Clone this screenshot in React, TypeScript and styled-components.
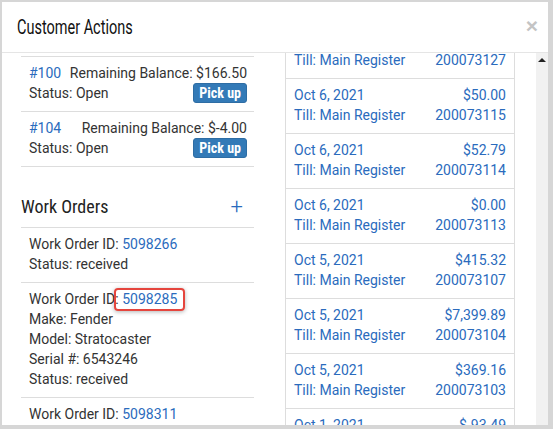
import React, { useLayoutEffect, useRef } from "react";
import styled, { createGlobalStyle } from "styled-components";

const GlobalStyle = createGlobalStyle`
  html, body { margin: 0; padding: 0; background: #d6d6d6; }
  body { font-family: Roboto, "Liberation Sans", sans-serif; color: #333; }
  * { box-sizing: border-box; }
`;

const NARROW = `"Liberation Sans Narrow", "Arial Narrow", "Roboto Condensed", "DejaVu Sans Condensed", sans-serif`;
const BLUE = "#2a6bbd";
const LINE = "#dddddd";

const Frame = styled.div`
  width: 553px;
  height: 429px;
  padding: 2px 5px 4px 2px;
  background: #d6d6d6;
`;

const Modal = styled.div`
  height: 100%;
  background: #fff;
  display: flex;
  flex-direction: column;
`;

const Header = styled.div`
  flex-shrink: 0;
  height: 51px;
  border-bottom: 1px solid #e5e5e5;
  display: flex;
  align-items: center;
  justify-content: space-between;
  padding: 0 10px 0 15px;
`;

const Title = styled.h4`
  margin: 0;
  font-family: Roboto, "Liberation Sans", sans-serif;
  font-weight: 400;
  font-size: 21px;
  line-height: 24px;
  color: #111;
  transform: scaleX(0.69);
  transform-origin: left center;
  white-space: nowrap;
`;

const Close = styled.button`
  border: 0;
  background: none;
  padding: 0 0 4px;
  font-family: "Liberation Sans", Arial, sans-serif;
  font-size: 21px;
  font-weight: 700;
  line-height: 1;
  color: #c4c4c4;
  cursor: pointer;
`;

const Body = styled.div`
  flex: 1;
  min-height: 0;
  display: flex;
`;

const Scroller = styled.div`
  flex: 1;
  position: relative;
  overflow: hidden;
`;

const Columns = styled.div`
  display: grid;
  grid-template-columns: 233px 230px;
  column-gap: 31px;
  align-items: start;
  padding: 15px 21px 0 19px;
`;

const Track = styled.div`
  width: 12px;
  flex-shrink: 0;
  background: #f1f1f1;
  display: flex;
  justify-content: center;
  padding-top: 5px;
`;

const ArrowUp = styled.div`
  width: 0;
  height: 0;
  border-left: 4px solid transparent;
  border-right: 4px solid transparent;
  border-bottom: 4px solid #222;
`;

const Column = styled.div`
  display: flex;
  flex-direction: column;
`;

const SectionHead = styled.div<{ $top: number }>`
  display: flex;
  align-items: center;
  justify-content: space-between;
  height: 22px;
  margin: ${(p) => p.$top}px 0 9px;
  padding-right: 11px;
`;

const HeadText = styled.h4`
  margin: 0;
  font-family: ${NARROW};
  font-weight: 400;
  font-size: 18px;
  line-height: 22px;
  color: #222;
`;

const Plus = styled.span`
  color: ${BLUE};
  font-size: 22px;
  font-weight: 300;
  line-height: 22px;
`;

const List = styled.div`
  border-top: 1px solid ${LINE};
`;

const Item = styled.div`
  padding: 6px 7px 8px 8px;
  border-bottom: 1px solid ${LINE};
  font-size: 14px;
  line-height: 20px;
`;

const Row = styled.div`
  display: flex;
  align-items: center;
  justify-content: space-between;
  height: 20px;
  white-space: nowrap;
`;

const Link = styled.a`
  color: ${BLUE};
  text-decoration: none;
`;

const Highlight = styled.span`
  position: relative;
  display: inline-block;
  &::after {
    content: "";
    position: absolute;
    top: -1px;
    bottom: -2px;
    left: -8px;
    right: -8px;
    border: 2px solid #e5453d;
    border-radius: 4px;
    box-shadow: 0 1px 4px rgba(0, 0, 0, 0.3);
    pointer-events: none;
  }
`;

const PickUp = styled.button`
  height: 20px;
  padding: 0 5px;
  border: 1px solid #2e6da4;
  border-radius: 3px;
  background: #337ab7;
  color: #fff;
  font-family: ${NARROW};
  font-size: 14px;
  font-weight: 700;
  line-height: 18px;
  cursor: pointer;
`;

const Box = styled.div`
  border: 1px solid ${LINE};
`;

const TxItem = styled.div`
  padding: 6px 8px 8px;
  border-bottom: 1px solid ${LINE};
  font-size: 14px;
  line-height: 20px;
  color: ${BLUE};
`;

const openOrders = [
  { id: "#100", balance: "$166.50" },
  { id: "#104", balance: "$-4.00" },
];

const workOrders = [
  { id: "5098266", highlight: false, lines: ["Status: received"] },
  {
    id: "5098285",
    highlight: true,
    lines: ["Make: Fender", "Model: Stratocaster", "Serial #: 6543246", "Status: received"],
  },
  { id: "5098311", highlight: false, lines: ["Status: received"] },
];

const transactions = [
  { date: "Oct 7, 2021", amount: "$120.00", id: "200073127" },
  { date: "Oct 6, 2021", amount: "$50.00", id: "200073115" },
  { date: "Oct 6, 2021", amount: "$52.79", id: "200073114" },
  { date: "Oct 6, 2021", amount: "$0.00", id: "200073113" },
  { date: "Oct 5, 2021", amount: "$415.32", id: "200073107" },
  { date: "Oct 5, 2021", amount: "$7,399.89", id: "200073104" },
  { date: "Oct 5, 2021", amount: "$369.16", id: "200073103" },
  { date: "Oct 1, 2021", amount: "$-93.49", id: "200073098" },
];

export default function App() {
  const scrollRef = useRef<HTMLDivElement>(null);
  const anchorRef = useRef<HTMLDivElement>(null);

  useLayoutEffect(() => {
    if (scrollRef.current && anchorRef.current) {
      scrollRef.current.scrollTop = anchorRef.current.offsetTop - 3;
    }
  }, []);

  return (
    <>
      <GlobalStyle />
      <Frame>
        <Modal>
          <Header>
            <Title>Customer Actions</Title>
            <Close aria-label="Close">×</Close>
          </Header>
          <Body>
            <Scroller ref={scrollRef}>
              <Columns>
                <Column>
                  <SectionHead $top={2}>
                    <HeadText>Open Orders</HeadText>
                  </SectionHead>
                  <List ref={anchorRef}>
                    {openOrders.map((o) => (
                      <Item key={o.id}>
                        <Row>
                          <Link href="#">{o.id}</Link>
                          <span>Remaining Balance: {o.balance}</span>
                        </Row>
                        <Row>
                          <span>Status: Open</span>
                          <PickUp>Pick up</PickUp>
                        </Row>
                      </Item>
                    ))}
                  </List>
                  <SectionHead $top={29}>
                    <HeadText>Work Orders</HeadText>
                    <Plus>+</Plus>
                  </SectionHead>
                  <List>
                    {workOrders.map((w) => (
                      <Item key={w.id}>
                        <div>
                          Work Order ID:{" "}
                          {w.highlight ? (
                            <Highlight>
                              <Link href="#">{w.id}</Link>
                            </Highlight>
                          ) : (
                            <Link href="#">{w.id}</Link>
                          )}
                        </div>
                        {w.lines.map((l) => (
                          <div key={l}>{l}</div>
                        ))}
                      </Item>
                    ))}
                  </List>
                </Column>
                <Box>
                  {transactions.map((t) => (
                    <TxItem key={t.id}>
                      <Row>
                        <span>{t.date}</span>
                        <span>{t.amount}</span>
                      </Row>
                      <Row>
                        <span>Till: Main Register</span>
                        <span>{t.id}</span>
                      </Row>
                    </TxItem>
                  ))}
                </Box>
              </Columns>
            </Scroller>
            <Track>
              <ArrowUp />
            </Track>
          </Body>
        </Modal>
      </Frame>
    </>
  );
}
